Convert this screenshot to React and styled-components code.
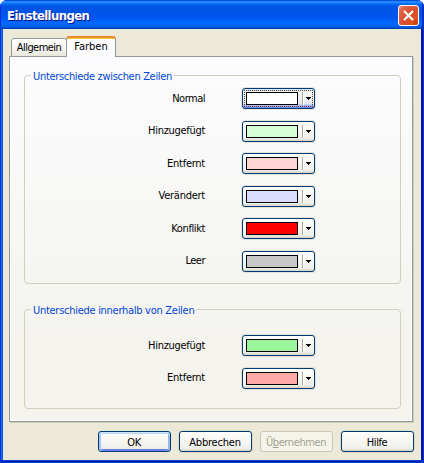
import React from 'react';
import styled, { createGlobalStyle, css } from 'styled-components';

const GlobalStyle = createGlobalStyle`
  * { box-sizing: border-box; }
  html, body { margin: 0; background: #fff; overflow: hidden; }
  body { font: 11px/14px "DejaVu Sans Condensed", "Tahoma", "DejaVu Sans", sans-serif; color: #000; }
`;

const Window = styled.div`
  width: 424px;
  height: 463px;
  display: flex;
  flex-direction: column;
  overflow: hidden;
  border-radius: 7px 7px 0 0;
  background: #0831d9;
`;

const TitleBar = styled.header`
  flex: 0 0 29px;
  display: flex;
  align-items: center;
  justify-content: space-between;
  padding: 2px 5px 0 7px;
  box-shadow: inset 1px 0 #0831d9, inset -2px 0 1px #0030c0;
  background: linear-gradient(180deg, #0048d8 0, #0058ee 3%, #3593ff 6%, #288eff 8%,
    #127dff 10%, #036ffc 13%, #0262ee 16%, #0057e5 21%, #0054e3 26%, #0055eb 56%,
    #005bf5 66%, #026afe 80%, #0062ef 90%, #0052d6 95%, #0040ab 100%);
`;

const Title = styled.h1`
  margin: 0;
  font: bold 13px/18px "DejaVu Sans Condensed", "DejaVu Sans", sans-serif;
  letter-spacing: -0.6px;
  color: #fff;
  text-shadow: 1px 1px #0f1089;
`;

const CloseButton = styled.button`
  width: 21px;
  height: 21px;
  padding: 0;
  border: 1px solid #fff;
  border-radius: 3px;
  background: radial-gradient(circle at 90% 90%, #cc3a00 0, #dc5527 20%, #d94c2b 50%, #e2694e 85%, #eba08e 100%);
  svg { display: block; }
`;

const Body = styled.main`
  flex: 1;
  margin: 0 3px 3px;
  padding: 7px 7px 0 6px;
  background: #ece9d8;
  box-shadow: -1px 0 #0855dd, -2px 0 #166aee, 1px 0 #001ea0, 2px 0 #00138c, 0 1px #0441d8, 0 2px #001ea0;
`;

const Tabs = styled.nav`
  display: flex;
  align-items: flex-end;
  height: 21px;
  margin-bottom: -1px;
  padding-left: 2px;
`;

const Tab = styled.button`
  font: inherit;
  letter-spacing: ${p => p.$spacing || 0}px;
  height: 19px;
  width: 56px;
  padding: 0;
  border: 1px solid #919b9c;
  border-radius: 3px 3px 0 0;
  background: linear-gradient(#fff, #f6f5f0 60%, #e9e7db);
  ${p => p.$active && css`
    position: relative;
    height: 21px;
    width: 50px;
    margin-left: -1px;
    padding-bottom: 2px;
    border-top: 2px solid #e68b2c;
    border-bottom: 0;
    background: linear-gradient(#ffc73c 0 1px, #fcfcfe 1px);
  `}
`;

const Panel = styled.section`
  width: 404px;
  height: 366px;
  padding: 18px 11px 0 14px;
  border: 1px solid #919b9c;
  background: linear-gradient(#fcfcfe, #f4f3ee 80%, #f4f3ee);
  box-shadow: inset -1px -1px #fff, inset 1px 0 #fff, 1px 1px #d0cebf;
`;

const Group = styled.section`
  height: ${p => p.$height}px;
  margin-bottom: 25px;
  border: 1px solid #d0d0bf;
  border-radius: 4px;
`;

const GroupTitle = styled.h2`
  width: max-content;
  margin: -6px 0 0 6px;
  padding: 0 2px;
  font: inherit;
  letter-spacing: ${p => p.$spacing}px;
  color: #0046d5;
  background: ${p => p.$fill};
`;

const Rows = styled.div`
  display: grid;
  grid-template-rows: ${p => p.$tracks};
  padding-top: ${p => p.$top}px;
`;

const Row = styled.div`
  display: grid;
  grid-template-columns: 180px 73px;
  column-gap: 37px;
  align-items: start;
`;

const Label = styled.span`
  padding-top: ${p => p.$drop}px;
  text-align: right;
  letter-spacing: ${p => p.$spacing}px;
`;

const raised = css`
  border: 1px solid #003c74;
  border-radius: 3px;
  background: linear-gradient(#fff, #f8f7f3 40%, #f0f0ea 85%, #d6d0c5);
  box-shadow: 0 0 0 1px rgba(190, 185, 165, 0.35);
`;

const Picker = styled.button`
  ${raised}
  width: 73px;
  height: 21px;
  display: flex;
  align-items: flex-start;
  padding: 3px;
  ${p => p.$focused && css`
    background: linear-gradient(#cee7ff, #f5f5f2 20%, #e8eaf0 75%, #6982ee);
    outline: 1px dotted #6b3a2a;
    outline-offset: -3px;
  `}
`;

const Swatch = styled.span`
  width: 52px;
  height: 13px;
  border: 1px solid #000;
  background: ${p => p.$color};
`;

const Divider = styled.span`
  width: 1px;
  height: 13px;
  margin: 0 3px 0 4px;
  background: #aca899;
  box-shadow: 1px 0 #fff;
`;

const Arrow = styled.svg`
  display: block;
  margin-top: 5px;
`;

const Actions = styled.footer`
  display: flex;
  justify-content: flex-end;
  gap: 8px;
  margin: 9px 0 0;
`;

const Action = styled.button`
  ${raised}
  font: inherit;
  letter-spacing: ${p => p.$spacing || 0}px;
  width: 73px;
  height: 21px;
  padding: 2px 1px 0 0;
  color: #000;
  ${p => p.$primary && css`
    box-shadow: inset 0 1px #cee7ff, inset 0 2px #bcd4f6, inset 2px 0 #a9c4f2, inset -2px 0 #98b4ee, inset 0 -2px #6982ee;
  `}
  &:disabled {
    color: #a1a192;
    border-color: #c9c7ba;
    background: #f5f4ea;
    box-shadow: none;
  }
`;

const lineColors = [
  ['Normal', '#ffffff', -0.5],
  ['Hinzugefügt', '#d6ffd6', -0.3],
  ['Entfernt', '#ffd6d6', -0.25],
  ['Verändert', '#dcdcff', -0.25],
  ['Konflikt', '#ff0000', -0.4],
  ['Leer', '#c8c8c8', -0.5],
];

const innerColors = [
  ['Hinzugefügt', '#9bf59b', -0.3],
  ['Entfernt', '#ffa8a8', -0.25],
];

function ColorRows({ items, top, tracks, focused }) {
  return (
    <Rows $top={top} $tracks={tracks}>
      {items.map(([name, color, spacing], i) => (
        <Row key={name}>
          <Label $drop={i % 2 ? 3 : 4} $spacing={spacing}>{name}</Label>
          <Picker $focused={focused === i} aria-label={name}>
            <Swatch $color={color} />
            <Divider />
            <Arrow width="5" height="3" shapeRendering="crispEdges">
              <path d="M0 0h5v1H4v1H3v1H2V2H1V1H0z" />
            </Arrow>
          </Picker>
        </Row>
      ))}
    </Rows>
  );
}

export default function App() {
  return (
    <>
      <GlobalStyle />
      <Window>
        <TitleBar>
          <Title>Einstellungen</Title>
          <CloseButton aria-label="Schließen">
            <svg width="19" height="19" viewBox="0 0 19 19">
              <path d="M5 5l9 9M14 5l-9 9" stroke="#fff" strokeWidth="2.2" />
            </svg>
          </CloseButton>
        </TitleBar>
        <Body>
          <Tabs>
            <Tab $spacing={-0.55}>Allgemein</Tab>
            <Tab $active $spacing={0}>Farben</Tab>
          </Tabs>
          <Panel>
            <Group $height={209}>
              <GroupTitle $spacing={-0.32} $fill="#fbfbfd">Unterschiede zwischen Zeilen</GroupTitle>
              <ColorRows items={lineColors} top={4} tracks="33px 32px 33px 32px 33px 21px" focused={0} />
            </Group>
            <Group $height={100}>
              <GroupTitle $spacing={-0.28} $fill="#f5f4f0">Unterschiede innerhalb von Zeilen</GroupTitle>
              <ColorRows items={innerColors} top={17} tracks="33px 21px" />
            </Group>
          </Panel>
          <Actions>
            <Action $primary $spacing={-0.4}>OK</Action>
            <Action $spacing={-0.2}>Abbrechen</Action>
            <Action disabled $spacing={-0.4}>Ü<u>b</u>ernehmen</Action>
            <Action $spacing={-0.4}>Hilfe</Action>
          </Actions>
        </Body>
      </Window>
    </>
  );
}
